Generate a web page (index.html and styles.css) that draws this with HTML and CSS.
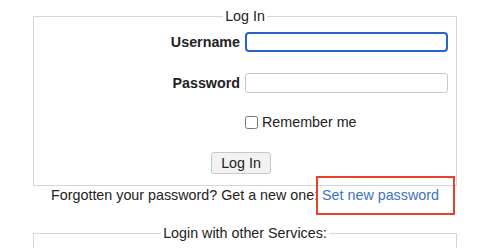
FILE: index.html
```html
<!DOCTYPE html>
<html>
<head>
<meta charset="utf-8">
<title>Log In</title>
<link rel="stylesheet" href="styles.css">
</head>
<body>
<div class="page">
  <fieldset class="box">
    <legend>Log In</legend>
    <div class="form">
      <label class="lbl" for="user">Username</label>
      <input class="field focus" id="user" type="text">
      <label class="lbl" for="pass">Password</label>
      <input class="field" id="pass" type="password">
      <span></span>
      <label class="remember"><input type="checkbox"> Remember me</label>
      <div class="submit"><button type="submit">Log In</button></div>
    </div>
  </fieldset>
  <p class="forgot">Forgotten your password? Get a new one: <a href="#">Set new password</a></p>
  <fieldset class="box other">
    <legend>Login with other Services:</legend>
  </fieldset>
  <div class="callout"></div>
</div>
</body>
</html>
```

FILE: styles.css
```css
* { box-sizing: border-box; }
body { margin: 8px 0 0 0; font-family: "Liberation Sans", Arial, sans-serif; font-size: 14.3px; color: #222; background: #fff; }

.page { position: relative; margin-left: 33px; width: 424px; }

.box { margin: 0; padding: 0 0 11px 0; border: 1px solid #d6d6d6; }
.box legend { margin: 0 auto; padding: 0 2px; color: #222; }

.form {
  display: grid;
  grid-template-columns: 206px 203px;
  column-gap: 5px;
  row-gap: 21px;
  align-items: center;
  padding-top: 8px;
}
.lbl { text-align: right; font-weight: bold; }
.field { height: 20px; border: 1px solid #c8c8c8; border-radius: 3px; font: inherit; padding: 0 4px; }
.field.focus { border: 2px solid #2a62c9; border-radius: 4px; outline: none; }

.remember { display: flex; align-items: center; gap: 4px; }
.remember input { margin: 0; width: 13px; height: 13px; }

.submit { grid-column: 1 / 3; text-align: center; margin-top: 1px; }
.submit button { font: inherit; height: 22px; padding: 0 9px; border: 1px solid #c8c8c8; border-radius: 3px; background: #f2f2f2; color: #222; }

.forgot { margin: 0; text-align: center; line-height: 18px; }
.forgot a { color: #3b72bf; text-decoration: none; }

.other { margin-top: 21px; height: 40px; }

.callout { position: absolute; left: 283px; top: 168px; width: 139px; height: 39px; border: 2px solid #e8422d; }
```
